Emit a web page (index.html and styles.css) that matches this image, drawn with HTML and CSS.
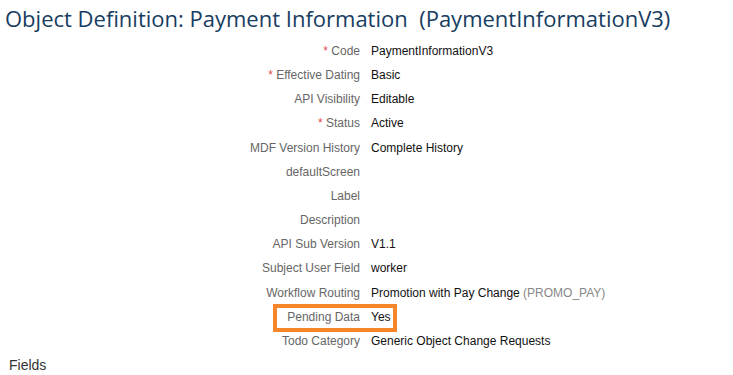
FILE: index.html
```html
<!DOCTYPE html>
<html>
<head>
  <meta charset="UTF-8" />
  <title>Object Definition: Payment Information</title>
  <link rel="stylesheet" href="styles.css">
</head>
<body>

<h1 class="page-title">Object Definition: Payment Information&nbsp; (PaymentInformationV3)</h1>

<div class="details">
  <div class="row">
    <div class="label"><span class="req">*</span> Code</div>
    <div class="value">PaymentInformationV3</div>
  </div>
  <div class="row">
    <div class="label"><span class="req">*</span> Effective Dating</div>
    <div class="value">Basic</div>
  </div>
  <div class="row">
    <div class="label">API Visibility</div>
    <div class="value">Editable</div>
  </div>
  <div class="row">
    <div class="label"><span class="req">*</span> Status</div>
    <div class="value">Active</div>
  </div>
  <div class="row">
    <div class="label">MDF Version History</div>
    <div class="value">Complete History</div>
  </div>
  <div class="row">
    <div class="label">defaultScreen</div>
    <div class="value"></div>
  </div>
  <div class="row">
    <div class="label">Label</div>
    <div class="value"></div>
  </div>
  <div class="row">
    <div class="label">Description</div>
    <div class="value"></div>
  </div>
  <div class="row">
    <div class="label">API Sub Version</div>
    <div class="value">V1.1</div>
  </div>
  <div class="row">
    <div class="label">Subject User Field</div>
    <div class="value">worker</div>
  </div>
  <div class="row">
    <div class="label">Workflow Routing</div>
    <div class="value">Promotion with Pay Change <span class="code">(PROMO_PAY)</span></div>
  </div>
  <div class="row highlight">
    <div class="label">Pending Data</div>
    <div class="value">Yes</div>
  </div>
  <div class="row">
    <div class="label">Todo Category</div>
    <div class="value">Generic Object Change Requests</div>
  </div>
</div>

<h2 class="section-title">Fields</h2>

</body>
</html>
```

FILE: styles.css
```css
body {
  margin: 0;
  padding: 0;
  background-color: #ffffff;
  font-family: "Liberation Sans", Arial, sans-serif;
  color: #333333;
}
.page-title {
  margin: 0;
  padding: 0 5px;
  height: 39px;
  line-height: 37px;
  font-family: "Open Sans", sans-serif;
  font-size: 22px;
  font-weight: 400;
  color: #173d62;
  white-space: nowrap;
}
.details {
  display: flex;
  flex-direction: column;
}
.row {
  display: grid;
  grid-template-columns: 360px 1fr;
  column-gap: 11px;
  height: 24.17px;
  line-height: 24px;
  font-size: 12px;
}
.label {
  text-align: right;
  color: #666666;
}
.req {
  color: #e34b4b;
}
.value {
  color: #111111;
}
.code {
  color: #888888;
}
/* orange callout box round one row */
.highlight {
  position: relative;
}
.highlight::after {
  content: "";
  position: absolute;
  left: 273px;
  top: -1px;
  width: 124px;
  height: 28px;
  box-sizing: border-box;
  border: 4px solid #f7852a;
}
.section-title {
  margin: 0;
  padding: 2px 9px 0 9px;
  line-height: 20px;
  font-size: 14px;
  font-weight: 400;
  color: #333333;
}
```
